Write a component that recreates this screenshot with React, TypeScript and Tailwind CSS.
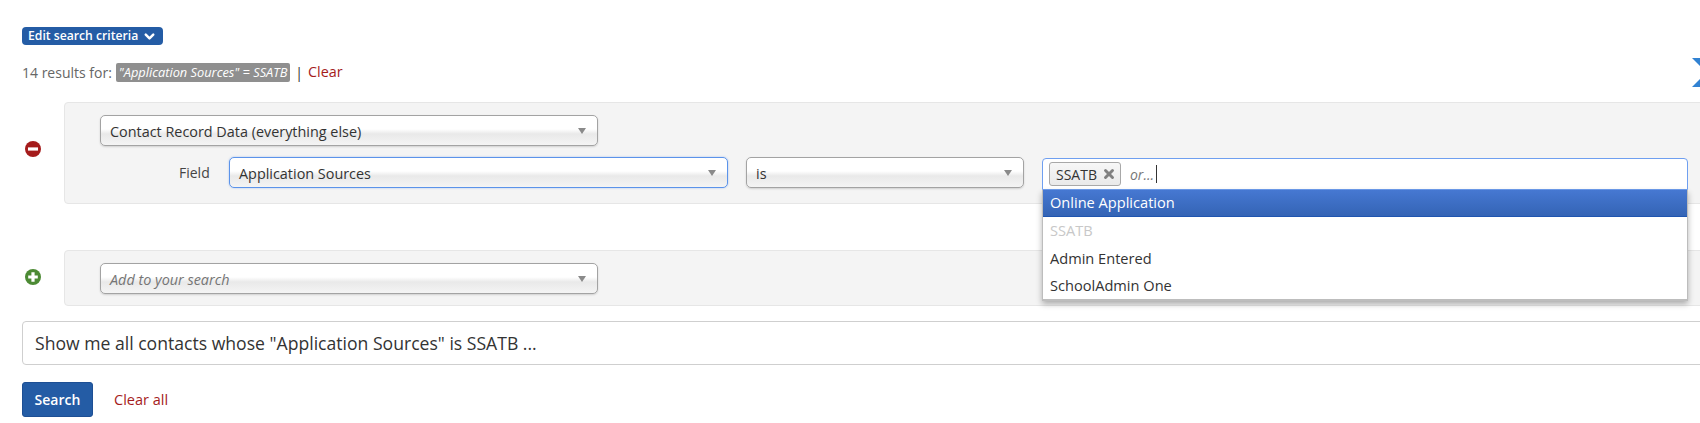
import { ChevronDown, X } from 'lucide-react'

const FONT = "font-['Open_Sans','Noto_Sans',sans-serif]"

function SelectBox({
  label,
  width,
  focused,
  muted,
  height,
}: {
  label: string
  width: string
  focused?: boolean
  muted?: boolean
  height: string
}) {
  return (
    <div
      className={`${width} ${height} flex items-center justify-between rounded-[5px] border bg-[linear-gradient(#fff_0%,#fff_45%,#e9e9e9_62%,#f4f4f4_100%)] pl-[9px] pr-[11px] text-[14.4px] ${
        focused
          ? 'border-[#5b93ea] shadow-[0_0_2px_rgba(80,140,235,0.5)]'
          : 'border-[#a3a3a3] shadow-[0_1px_2px_rgba(0,0,0,0.15)]'
      } ${muted ? 'italic text-[#757575]' : 'text-[#333]'}`}
    >
      <span className="pt-[2px]">{label}</span>
      <span className="h-0 w-0 border-x-[4px] border-t-[6px] border-x-transparent border-t-[#8a8a8a]" />
    </div>
  )
}

function Panel({ children, className }: { children: React.ReactNode; className: string }) {
  return (
    <div
      className={`ml-[42px] -mr-[40px] rounded-[4px] border border-[#e6e6e6] bg-[#f4f4f4] pl-[35px] ${className}`}
    >
      {children}
    </div>
  )
}

function MinusIcon() {
  return (
    <svg viewBox="0 0 14 14" className="h-[16px] w-[16px]">
      <circle cx="7" cy="7" r="7" fill="#a51c1c" />
      <rect x="2.6" y="5.6" width="8.8" height="2.8" fill="#fff" />
    </svg>
  )
}

function PlusIcon() {
  return (
    <svg viewBox="0 0 14 14" className="h-[16px] w-[16px]">
      <circle cx="7" cy="7" r="7" fill="#4c8a34" />
      <path d="M5.6 2.8h2.8v2.8h2.8v2.8H8.4v2.8H5.6V8.4H2.8V5.6h2.8z" fill="#fff" />
    </svg>
  )
}

export default function App() {
  return (
    <div className={`${FONT} relative h-[423px] w-[1700px] overflow-hidden bg-white pl-[22px] pt-[27px]`}>
      <button className="flex h-[18px] items-center gap-[4px] rounded-[4px] bg-[#245ca5] px-[6px] text-[12.2px] font-semibold text-white">
        Edit search criteria
        <ChevronDown size={15} strokeWidth={4} />
      </button>

      <div className="mt-[18px] flex h-[19px] items-center text-[14px] text-[#666]">
        <span>14 results for:</span>
        <span className="ml-[4px] flex h-[19px] items-center rounded-[2px] bg-[#8f8f8f] px-[3px] text-[12.8px] italic font-medium text-white">
          "Application Sources" = SSATB
        </span>
        <span className="ml-[5px] text-[#333]">|</span>
        <span className="ml-[5px] pb-px text-[14.4px] text-[#a51c1c]">Clear</span>
      </div>

      {/* blue corner glyph cut off by the window edge */}
      <svg viewBox="0 0 8 29" className="absolute right-0 top-[58px] h-[29px] w-[8px]">
        <path d="M0 0H8V8Z M0 29L8 21V29Z" fill="#3182d2" />
      </svg>

      <div className="relative mt-[20px]">
        <div className="absolute left-[3px] top-[39px]">
          <MinusIcon />
        </div>
        <Panel className="h-[102px] pt-[12px]">
          <SelectBox label="Contact Record Data (everything else)" width="w-[498px]" height="h-[31px]" />
          <div className="mt-[11px] flex items-center text-[14px] text-[#444]">
            <span className="ml-[79px] w-[50px]">Field</span>
            <SelectBox label="Application Sources" width="w-[499px]" height="h-[31px]" focused />
            <div className="ml-[18px]">
              <SelectBox label="is" width="w-[278px]" height="h-[31px]" />
            </div>
          </div>
        </Panel>
      </div>

      <div className="relative mt-[46px]">
        <div className="absolute left-[3px] top-[19px]">
          <PlusIcon />
        </div>
        <Panel className="h-[56px] pt-[12px]">
          <SelectBox label="Add to your search" width="w-[498px]" height="h-[31px]" muted />
        </Panel>
      </div>

      <div className="-mr-[40px] mt-[15px] flex h-[44px] items-center rounded-[4px] border border-[#cfcfcf] bg-white pl-[12px] text-[17.6px] text-[#333]">
        Show me all contacts whose "Application Sources" is SSATB ...
      </div>

      <div className="mt-[17px] flex items-center">
        <button className="h-[35px] w-[71px] rounded-[3px] border border-[#1d4f94] bg-[#245ca5] text-[14px] font-semibold text-white">
          Search
        </button>
        <span className="ml-[21px] text-[14.5px] text-[#a51c1c]">Clear all</span>
      </div>

      {/* open multi-select, floats over the panels */}
      <div className="absolute left-[1042px] top-[158px] w-[646px]">
        <div className="flex h-[32px] items-center rounded-t-[4px] border border-[#6f9ff0] bg-white pl-[6px] text-[14px]">
          <span className="flex h-[24px] items-center gap-[5px] rounded-[3px] border border-[#a8a8a8] bg-gradient-to-b from-[#f7f7f7] to-[#e9e9e9] pl-[6px] pr-[4px] text-[#333]">
            SSATB
            <X size={14} strokeWidth={5} className="text-[#808080]" />
          </span>
          <span className="ml-[9px] italic text-[#777]">or...</span>
          <span className="ml-[2px] h-[18px] w-px bg-[#333]" />
        </div>
        <div className="border-x border-b-2 border-[#bdbdbd] bg-white text-[14.6px] text-[#333] shadow-[0_3px_6px_rgba(0,0,0,0.3)]">
          <div className="flex h-[27px] items-center border-b border-[#1f55b0] bg-gradient-to-b from-[#4678d2] to-[#3464b5] pl-[7px] text-white">
            Online Application
          </div>
          <div className="flex h-[28px] items-center pl-[7px] text-[#c8c8c8]">SSATB</div>
          <div className="flex h-[27px] items-center pl-[7px]">Admin Entered</div>
          <div className="flex h-[27px] items-center pl-[7px]">SchoolAdmin One</div>
        </div>
      </div>
    </div>
  )
}
